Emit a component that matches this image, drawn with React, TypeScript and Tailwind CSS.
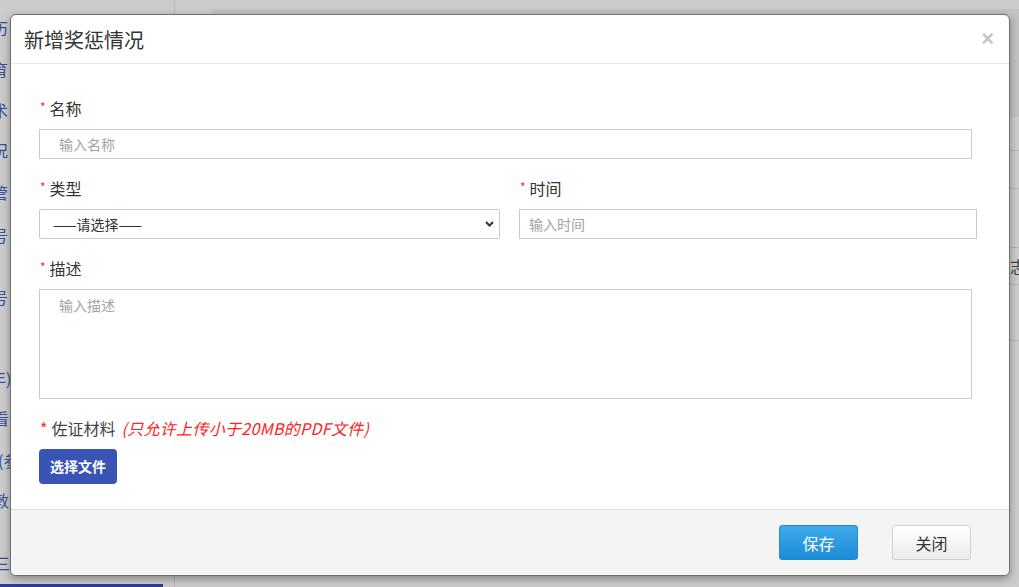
const sideItems = [
  { text: '历', cls: 'mt-[18px] -ml-[8px]' },
  { text: '育', cls: 'mt-[21px] -ml-[8px]' },
  { text: '术', cls: 'mt-[21px] -ml-[8px]' },
  { text: '况', cls: 'mt-[20px] -ml-[8px]' },
  { text: '管', cls: 'mt-[22px] -ml-[8px]' },
  { text: '号', cls: 'mt-[23px] -ml-[8px]' },
  { text: '号', cls: 'mt-[42px] -ml-[8px]' },
  { text: '年)', cls: 'mt-[61px] -ml-[10px]' },
  { text: '看', cls: 'mt-[20px] -ml-[7px]' },
  { text: '(参', cls: 'mt-[22px] -ml-[2px]' },
  { text: '敦', cls: 'mt-[20px] -ml-[7px]' },
  { text: '三', cls: 'mt-[43px] -ml-[6px]' },
]

const font = { fontFamily: "'Noto Sans CJK SC', 'Noto Sans', sans-serif" }

function Label({ text }: { text: string }) {
  return (
    <div className="flex items-start h-5 mb-[11px] leading-5 text-[16px] text-[#333]">
      <span className="text-[12px] leading-[14px] mt-[2px] text-[#ff2a2a] ml-px mr-[4px]">*</span>
      <span>{text}</span>
    </div>
  )
}

export default function App() {
  return (
    <div className="relative w-[1019px] h-[587px] overflow-hidden bg-white" style={font}>
      {/* page behind the dialog */}
      <div className="flex h-full">
        <div className="relative w-[175px] shrink-0 border-r border-[#e6e6e6] flex flex-col">
          {sideItems.map((it, i) => (
            <div key={i} className={`${it.cls} h-5 leading-5 text-[16px] text-[#4a5fc2] whitespace-nowrap`}>
              {it.text}
            </div>
          ))}
          <div className="mt-auto h-[3px] w-[163px] bg-[#384fb6]" />
        </div>
        <div className="flex-1 flex flex-col">
          <div className="h-[108px] ml-[37px] mt-[9px] bg-[#f3f3f5]" />
          <div className="ml-[37px] mt-[33px] border-t border-[#e4e4e4] h-[38px]" />
          <div className="ml-[37px] border-t border-[#e4e4e4] h-[59px]" />
          <div className="ml-[37px] border-t border-[#e4e4e4] h-[37px] flex items-center justify-end pr-[1px] text-[16px] text-[#555]">
            <span className="-mr-[8px]">志</span>
          </div>
          <div className="ml-[37px] border-t border-[#e4e4e4] h-[56px]" />
          <div className="ml-[37px] border-t border-[#e4e4e4]" />
        </div>
      </div>

      {/* backdrop */}
      <div className="absolute inset-0 bg-black/20" />

      {/* dialog */}
      <div className="absolute left-[10px] top-[14px] w-[1000px] h-[562px] bg-white border border-[#6f6f6f] rounded-[6px] shadow-[0_3px_9px_rgba(0,0,0,0.35)] flex flex-col overflow-hidden">
        <div className="h-[49px] shrink-0 border-b border-[#e8e8e8] flex items-center justify-between pl-[13px] pr-[15px]">
          <span className="text-[20px] text-[#333] leading-none mt-[2px]">新增奖惩情况</span>
          <span className="text-[22px] font-bold text-[#c6c6c6] leading-none" style={{ fontFamily: "'Liberation Sans', sans-serif" }}>×</span>
        </div>

        <div className="flex-1 pt-[34px] pl-[28px] pr-[37px]">
          <Label text="名称" />
          <input
            className="block w-[933px] h-[30px] border border-[#cbcbcb] pl-[19px] text-[14px] text-[#333] placeholder:text-[#a3a3a3] outline-none"
            placeholder="输入名称"
          />

          <div className="flex w-[938px] gap-[19px] mt-[19px]">
            <div className="w-[461px] shrink-0">
              <Label text="类型" />
              <div className="relative">
                <select className="block appearance-none w-full h-[30px] border border-[#cbcbcb] rounded-[2px] pl-[13px] text-[14px] text-[#333] bg-white outline-none">
                  <option>——请选择——</option>
                </select>
                <svg className="absolute right-[6px] top-[12px] pointer-events-none" width="9" height="6" viewBox="0 0 9 6">
                  <polyline points="1,1 4.5,4.5 8,1" fill="none" stroke="#333" strokeWidth="2" />
                </svg>
              </div>
            </div>
            <div className="w-[458px] shrink-0">
              <Label text="时间" />
              <input
                className="block w-full h-[30px] border border-[#cbcbcb] pl-[9px] text-[14px] text-[#333] placeholder:text-[#a3a3a3] outline-none"
                placeholder="输入时间"
              />
            </div>
          </div>

          <div className="mt-[19px]">
            <Label text="描述" />
            <textarea
              className="block w-[933px] h-[110px] border border-[#cbcbcb] pl-[19px] pt-[5px] text-[14px] text-[#333] placeholder:text-[#a3a3a3] outline-none resize-none"
              placeholder="输入描述"
            />
          </div>

          <div className="mt-[19px] flex items-start h-5 mb-[11px] leading-5 text-[16px] text-[#333]">
            <span className="text-[16px] leading-5 text-[#ff2a2a] ml-px mr-[4px]">*</span>
            <span className="text-[#444]">佐证材料</span>
            <span className="ml-[6px] italic tracking-[0.3px] text-[#ff2222]">(只允许上传小于20MB的PDF文件)</span>
          </div>
          <button className="block w-[78px] h-[35px] rounded-[4px] bg-[#3a54b6] text-white text-[14px] font-bold">
            选择文件
          </button>
        </div>

        <div className="h-[66px] shrink-0 bg-[#f4f4f4] border-t border-[#dedede] flex items-center justify-end gap-[34px] pr-[38px]">
          <button className="w-[79px] h-[35px] rounded-[3px] border border-[#1f8ad0] bg-gradient-to-b from-[#3eaaec] to-[#1b8cd6] text-white text-[16px]">
            保存
          </button>
          <button className="w-[79px] h-[35px] rounded-[3px] border border-[#d2d2d2] bg-gradient-to-b from-white to-[#ececec] text-[#333] text-[16px]">
            关闭
          </button>
        </div>
      </div>
    </div>
  )
}
